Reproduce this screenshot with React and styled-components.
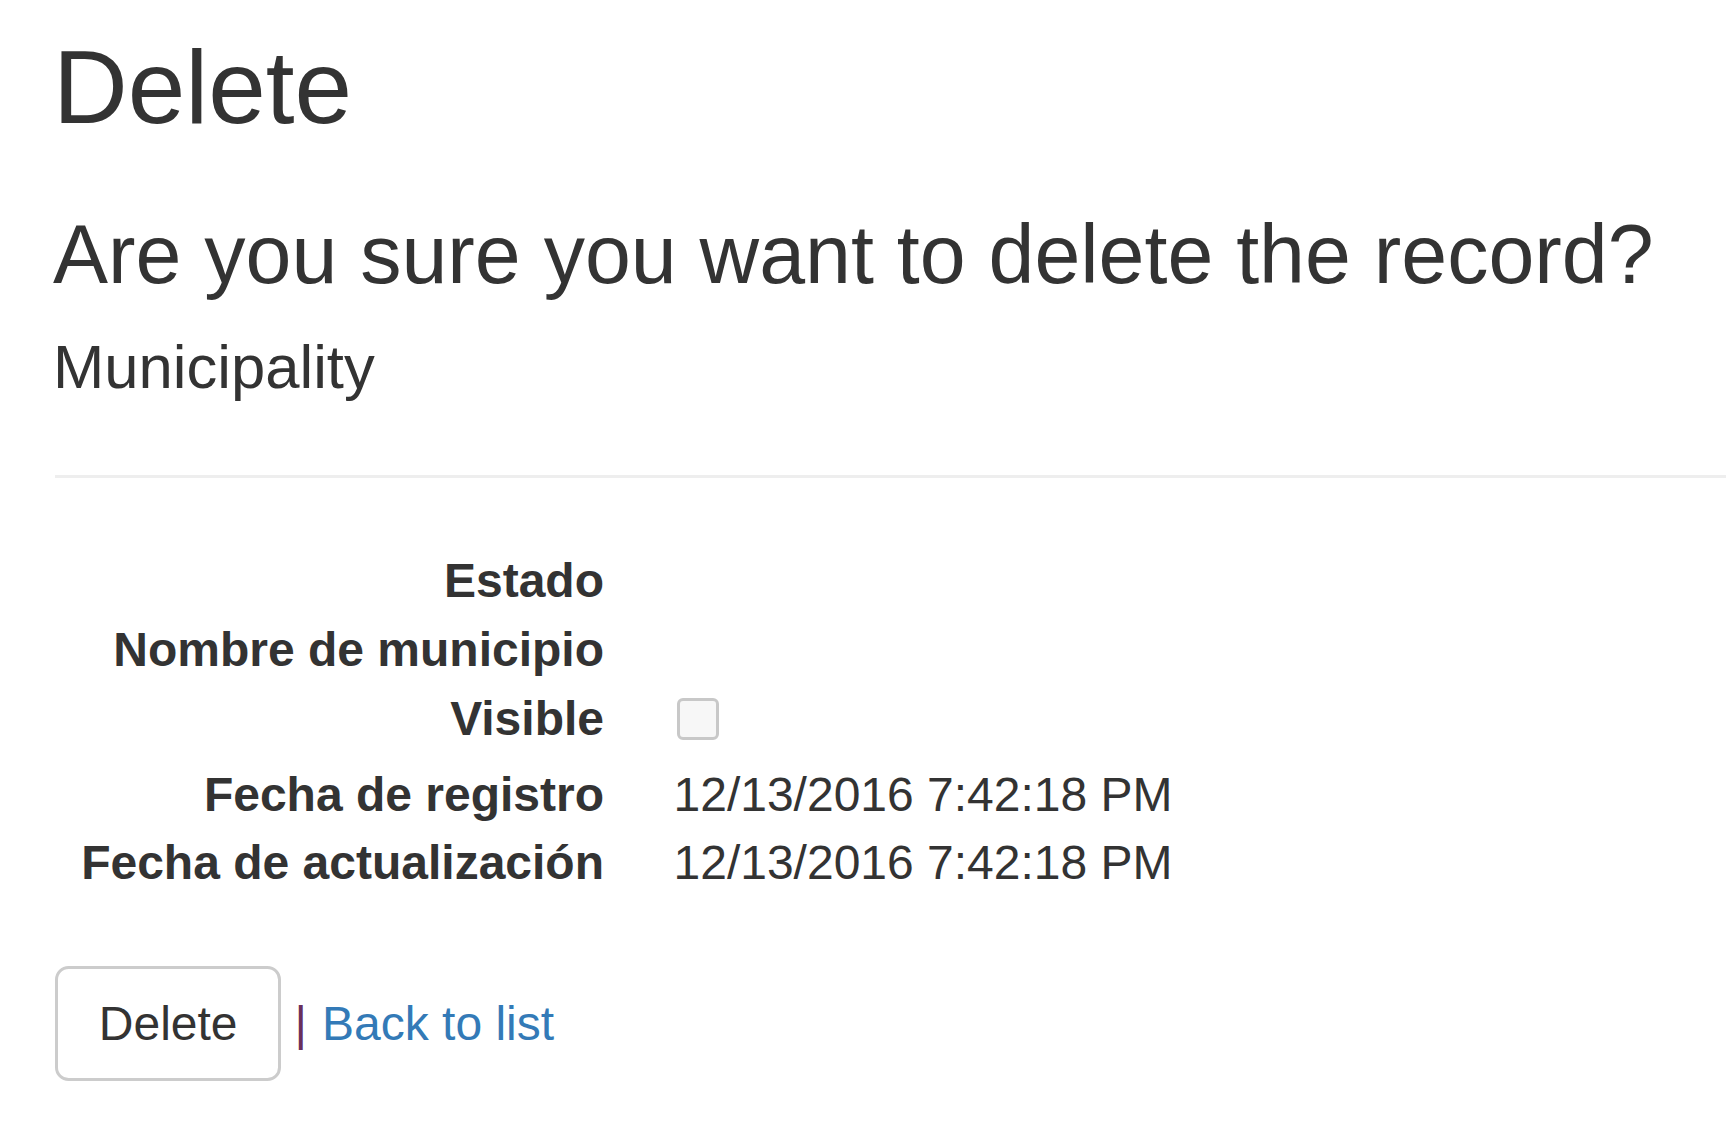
import React from "react";
import styled, { createGlobalStyle } from "styled-components";

const GlobalStyle = createGlobalStyle`
  html, body {
    margin: 0;
    padding: 0;
    background: #ffffff;
  }
  body {
    font-family: "Liberation Sans", Arial, Helvetica, sans-serif;
    color: #333333;
  }
`;

const Page = styled.div`
  padding: 31px 0 40px 55px;
  font-family: "Liberation Sans", Arial, Helvetica, sans-serif;
  color: #333333;
  font-size: 48px;
  line-height: 68px;
`;

const Heading = styled.h2`
  font-family: inherit;
  font-weight: 400;
  color: #333333;
  line-height: 1.1;
  margin: 0 0 ${(p) => p.$gap}px -2px;
  font-size: ${(p) => p.$size}px;
`;

const Divider = styled.hr`
  border: 0;
  border-top: 3.4px solid #eeeeee;
  margin: 0 0 69px 0;
  height: 0;
`;

const DetailList = styled.dl`
  display: grid;
  grid-template-columns: 549px 1fr;
  column-gap: 69.5px;
  align-items: start;
  margin: 0 0 68px 0;
  font-size: 48px;
  line-height: 68.8px;
`;

const Term = styled.dt`
  font-weight: 700;
  text-align: right;
  white-space: nowrap;
  margin: 0;
`;

const Detail = styled.dd`
  margin: 0;
  min-height: 68px;
  white-space: nowrap;
`;

const Check = styled.input`
  appearance: none;
  -webkit-appearance: none;
  display: block;
  box-sizing: border-box;
  width: 42px;
  height: 42px;
  margin: 13.5px 0 20.5px 3.5px;
  border: 3px solid #c8c8c8;
  border-radius: 6px;
  background: #f7f7f7;
`;

const Actions = styled.div`
  display: flex;
  align-items: baseline;
  font-size: 48px;
  line-height: 68px;
`;

const Button = styled.button`
  font-family: inherit;
  font-size: 48px;
  line-height: 68px;
  color: #333333;
  background: #ffffff;
  border: 3.4px solid #cccccc;
  border-radius: 13.6px;
  padding: 20.4px 40.8px;
  margin: 0;
  cursor: pointer;
`;

const Separator = styled.span`
  color: #6a2f5c;
  margin-left: 13.2px;
`;

const BackLink = styled.a`
  color: #337ab7;
  text-decoration: none;
  margin-left: 15px;
`;

const rows = [
  { label: "Estado", value: "" },
  { label: "Nombre de municipio", value: "" },
  { label: "Visible", check: true },
  { label: "Fecha de registro", value: "12/13/2016 7:42:18 PM" },
  { label: "Fecha de actualización", value: "12/13/2016 7:42:18 PM" },
];

export default function App() {
  return (
    <>
      <GlobalStyle />
      <Page>
        <Heading as="h2" $size={103.5} $gap={64}>Delete</Heading>
        <Heading as="h3" $size={82.5} $gap={33}>
          Are you sure you want to delete the record?
        </Heading>
        <Heading as="h4" $size={61.6} $gap={74.6}>Municipality</Heading>
        <Divider />
        <DetailList>
          {rows.map((r) => (
            <React.Fragment key={r.label}>
              <Term>{r.label}</Term>
              <Detail>
                {r.check ? <Check type="checkbox" disabled /> : r.value}
              </Detail>
            </React.Fragment>
          ))}
        </DetailList>
        <Actions>
          <Button type="button">Delete</Button>
          <Separator>|</Separator>
          <BackLink href="#">Back to list</BackLink>
        </Actions>
      </Page>
    </>
  );
}
